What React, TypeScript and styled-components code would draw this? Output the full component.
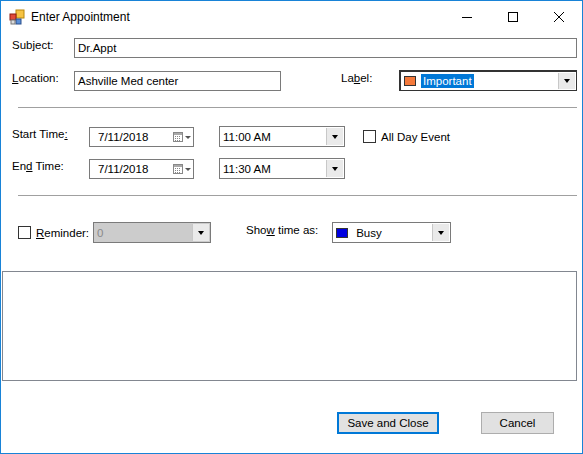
import React from 'react'
import styled, { createGlobalStyle } from 'styled-components'

const Global = createGlobalStyle`
  html, body { margin: 0; padding: 0; background: #fff; }
  body { font-family: "Liberation Sans", Arial, sans-serif; font-size: 11.5px; color: #000; }
`

const Window = styled.div`
  width: 583px;
  height: 454px;
  box-sizing: border-box;
  border: 1px solid #1883d7;
  background: #fff;
  display: flex;
  flex-direction: column;
`
const TitleBar = styled.div`
  height: 31px;
  display: flex;
  align-items: center;
  padding-left: 8px;
`
const Title = styled.div`
  margin-left: 6px;
  font-size: 12px;
  flex: 1;
`
const WinButton = styled.div`
  width: 46px;
  height: 31px;
  display: flex;
  align-items: center;
  justify-content: center;
`
const Body = styled.div`
  flex: 1;
  display: flex;
  flex-direction: column;
  padding: 6px 5px 0 11px;
`
const Row = styled.div<{ $mt?: number }>`
  display: flex;
  align-items: center;
  margin-top: ${({ $mt }) => $mt ?? 0}px;
`
const Label = styled.div<{ $w?: number; $ml?: number; $up?: number }>`
  width: ${({ $w }) => ($w ? `${$w}px` : 'auto')};
  flex: none;
  margin-left: ${({ $ml }) => $ml ?? 0}px;
  position: relative;
  top: ${({ $up }) => -($up ?? 0)}px;
  white-space: nowrap;
`
const TextBox = styled.div<{ $w?: number }>`
  box-sizing: border-box;
  height: 20px;
  width: ${({ $w }) => ($w ? `${$w}px` : 'auto')};
  flex: ${({ $w }) => ($w ? 'none' : 1)};
  border: 1px solid #7a7a7a;
  padding: 2px 3px;
  line-height: 14px;
`
const Combo = styled.div<{ $w: number; $ml?: number; $disabled?: boolean; $focus?: boolean }>`
  box-sizing: border-box;
  height: 21px;
  width: ${({ $w }) => $w}px;
  margin-left: ${({ $ml }) => $ml ?? 0}px;
  border: 1px solid ${({ $focus }) => ($focus ? '#333' : '#7a7a7a')};
  border-top-width: ${({ $focus }) => ($focus ? 2 : 1)}px;
  border-left-width: ${({ $focus }) => ($focus ? 2 : 1)}px;
  background: ${({ $disabled }) => ($disabled ? '#cccccc' : '#fff')};
  color: ${({ $disabled }) => ($disabled ? '#8a8a8a' : '#000')};
  display: flex;
  align-items: center;
`
const ComboText = styled.div`
  flex: 1;
  display: flex;
  align-items: center;
  padding-left: 3px;
  gap: 5px;
`
const Arrow = styled.div`
  width: 16px;
  align-self: stretch;
  margin: 1px;
  background: #eaeaea;
  border-left: 1px solid #c8c8c8;
  display: flex;
  align-items: center;
  justify-content: center;
  &::after {
    content: '';
    border-left: 3.5px solid transparent;
    border-right: 3.5px solid transparent;
    border-top: 4px solid #000;
  }
`
const Swatch = styled.div<{ $c: string }>`
  width: 10px;
  height: 8px;
  border: 1px solid #333;
  background: ${({ $c }) => $c};
`
const Selected = styled.span`
  background: #0078d7;
  color: #fff;
  padding: 1px 2px;
`
const Separator = styled.div<{ $mt: number }>`
  height: 1px;
  background: #a0a0a0;
  margin: ${({ $mt }) => $mt}px 0 0 6px;
`
const DateBox = styled.div`
  box-sizing: border-box;
  width: 105px;
  height: 20px;
  border: 1px solid #7a7a7a;
  display: flex;
  align-items: center;
  padding-left: 8px;
`
const DateText = styled.span`
  flex: 1;
`
const CheckBox = styled.div<{ $ml?: number }>`
  width: 11px;
  height: 11px;
  border: 1px solid #333;
  background: #fff;
  margin-left: ${({ $ml }) => $ml ?? 0}px;
  margin-right: 5px;
`
const Notes = styled.div`
  height: 108px;
  border: 1px solid #828790;
  margin: 28px 0 0 -10px;
`
const Footer = styled.div`
  display: flex;
  margin-top: 31px;
  padding-left: 325px;
`
const Button = styled.div<{ $w: number; $ml?: number; $def?: boolean }>`
  box-sizing: border-box;
  width: ${({ $w }) => $w}px;
  height: 22px;
  margin-left: ${({ $ml }) => $ml ?? 0}px;
  border: ${({ $def }) => ($def ? '2px solid #0078d7' : '1px solid #adadad')};
  background: #e1e1e1;
  display: flex;
  align-items: center;
  justify-content: center;
`

const CalIcon = () => (
  <svg width="20" height="10" viewBox="0 0 20 10">
    <rect x="0.5" y="0.5" width="9" height="9" fill="#fff" stroke="#888" />
    <rect x="1" y="1" width="8" height="2" fill="#aaa" />
    {[2, 4, 6].map(x => [4, 6, 8].map(y => <rect key={`${x}${y}`} x={x} y={y} width="1" height="1" fill="#888" />))}
    <path d="M12 4h6l-3 3z" fill="#555" />
  </svg>
)

const AppIcon = () => (
  <svg width="16" height="16" viewBox="0 0 16 16">
    <rect x="7" y="1" width="8" height="8" fill="#f6c343" stroke="#b8860b" />
    <rect x="1" y="5" width="6" height="6" fill="#e04a3a" stroke="#8b1a10" />
    <rect x="7" y="10" width="5" height="5" fill="#5a8fd8" stroke="#2a4f8b" />
    <rect x="2" y="11" width="4" height="4" fill="#ddd" stroke="#777" />
  </svg>
)

export default function App() {
  return (
    <>
      <Global />
      <Window>
        <TitleBar>
          <AppIcon />
          <Title>Enter Appointment</Title>
          <WinButton>
            <svg width="10" height="10"><path d="M0 5.5h10" stroke="#000" /></svg>
          </WinButton>
          <WinButton>
            <svg width="10" height="10"><rect x="0.5" y="0.5" width="9" height="9" fill="none" stroke="#000" /></svg>
          </WinButton>
          <WinButton>
            <svg width="10" height="10"><path d="M0 0L10 10M10 0L0 10" stroke="#000" /></svg>
          </WinButton>
        </TitleBar>
        <Body>
          <Row>
            <Label $w={62} $up={3}>Sub<u>j</u>ect:</Label>
            <TextBox>Dr.Appt</TextBox>
          </Row>
          <Row $mt={12}>
            <Label $w={62} $up={3}><u>L</u>ocation:</Label>
            <TextBox $w={207}>Ashville Med center</TextBox>
            <Label $w={58} $ml={60} $up={3}>La<u>b</u>el:</Label>
            <Combo $w={198} $focus>
              <ComboText><Swatch $c="#f4793b" /><Selected>Important</Selected></ComboText>
              <Arrow />
            </Combo>
          </Row>
          <Separator $mt={16} />
          <Row $mt={18}>
            <Label $w={77} $up={3}>Start Time<u>:</u></Label>
            <DateBox>
              <DateText>7/11/2018</DateText>
              <CalIcon />
            </DateBox>
            <Combo $w={126} $ml={25}>
              <ComboText>11:00 AM</ComboText>
              <Arrow />
            </Combo>
            <CheckBox $ml={18} />
            <span>All Day Event</span>
          </Row>
          <Row $mt={11}>
            <Label $w={77} $up={3}>En<u>d</u> Time:</Label>
            <DateBox>
              <DateText>7/11/2018</DateText>
              <CalIcon />
            </DateBox>
            <Combo $w={126} $ml={25}>
              <ComboText>11:30 AM</ComboText>
              <Arrow />
            </Combo>
          </Row>
          <Separator $mt={16} />
          <Row $mt={26}>
            <CheckBox $ml={6} />
            <Label $w={57}><u>R</u>eminder:</Label>
            <Combo $w={118} $disabled>
              <ComboText>0</ComboText>
              <Arrow />
            </Combo>
            <Label $w={86} $ml={35} $up={3}>Sho<u>w</u> time as:</Label>
            <Combo $w={119}>
              <ComboText><Swatch $c="#0000e0" />&nbsp;Busy</ComboText>
              <Arrow />
            </Combo>
          </Row>
          <Notes />
          <Footer>
            <Button $w={102} $def>Save and Close</Button>
            <Button $w={73} $ml={42}>Cancel</Button>
          </Footer>
        </Body>
      </Window>
    </>
  )
}
